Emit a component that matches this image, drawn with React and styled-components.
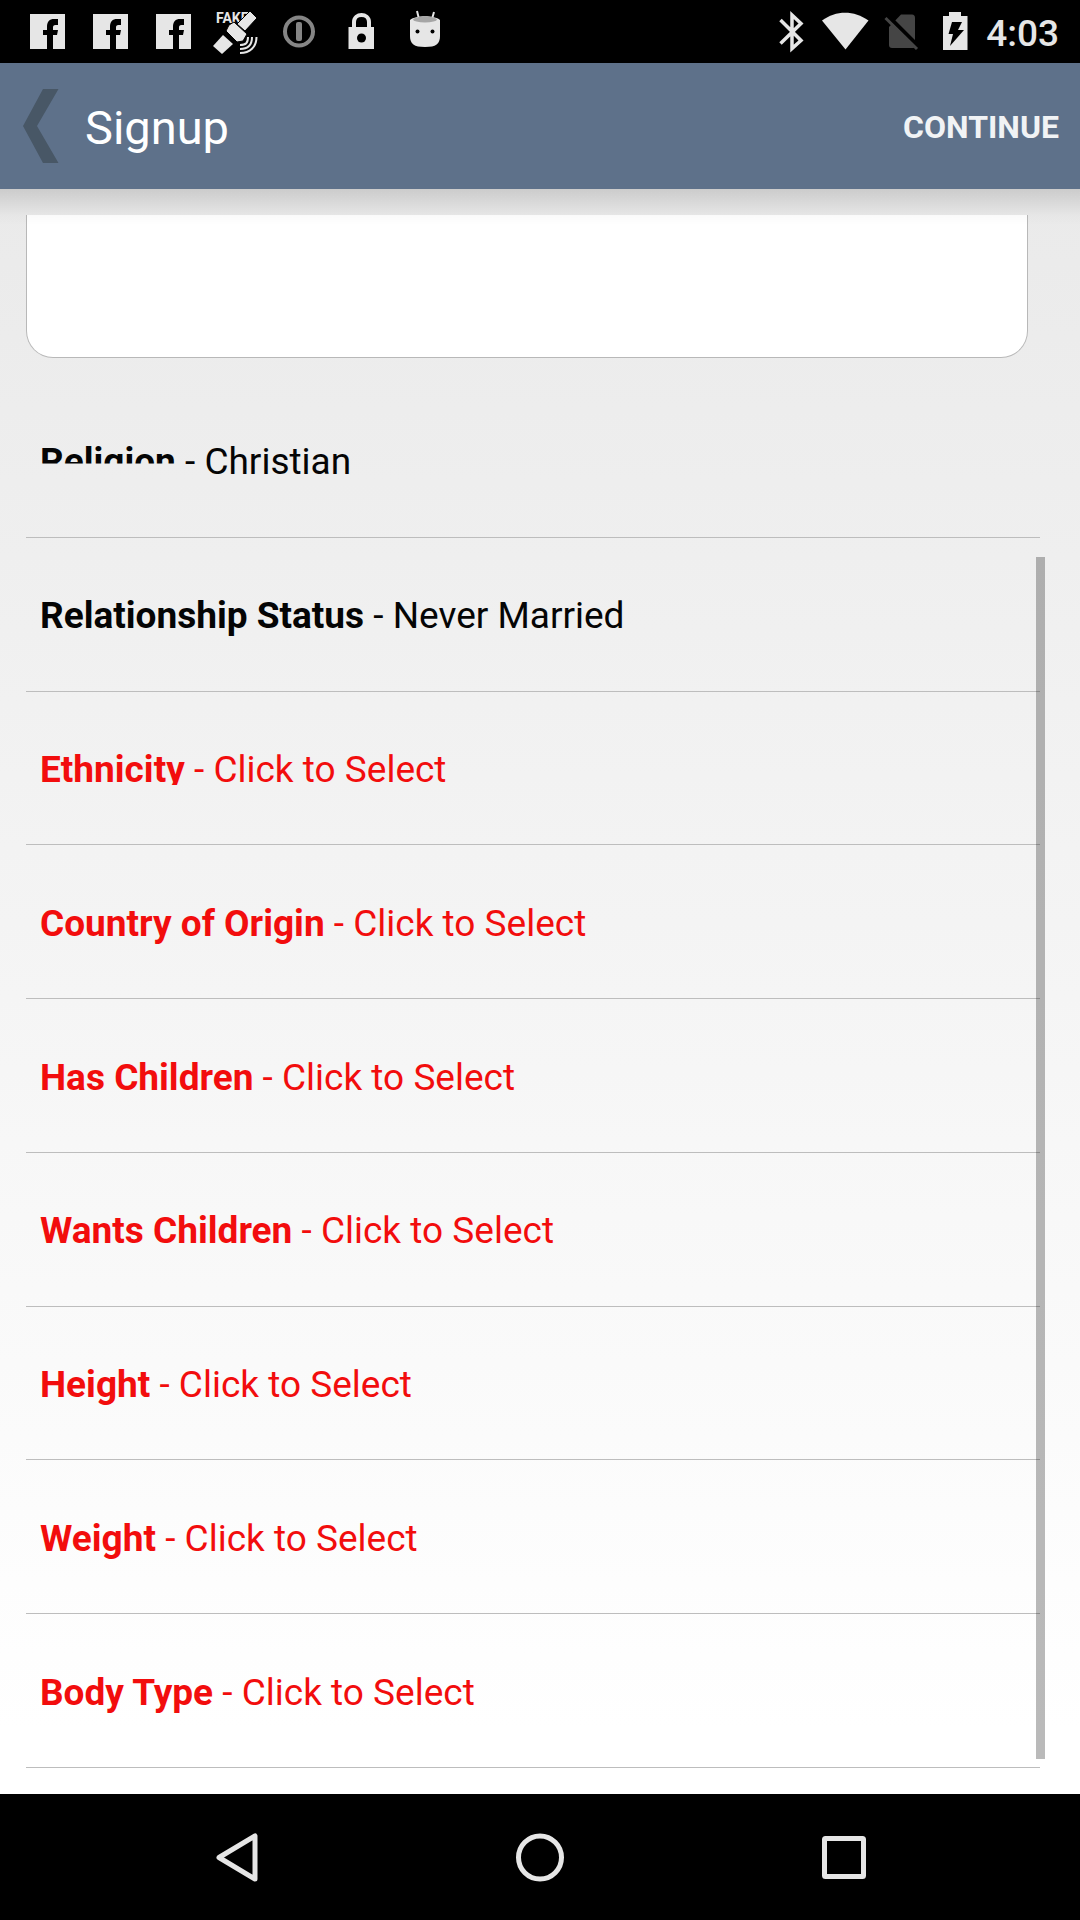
import React from "react";
import styled, { createGlobalStyle } from "styled-components";

const GlobalStyle = createGlobalStyle`
  *, *::before, *::after { box-sizing: border-box; }
  body { margin: 0; font-family: Roboto, "Noto Sans", sans-serif; background: #000; }
  button { border: 0; padding: 0; background: none; font: inherit; color: inherit; cursor: pointer; }
`;

const Screen = styled.div`
  display: flex;
  flex-direction: column;
  min-height: 100vh;
`;

const StatusBar = styled.div`
  display: flex;
  justify-content: space-between;
  height: 63px;
  padding: 0 21px 0 16px;
  background: #000;
  color: #e6e6e6;
`;

const StatusGroup = styled.div`
  display: flex;
  align-items: center;
`;

const StatusIcon = styled.svg`
  display: block;
  height: 63px;
  width: ${(p) => p.$width}px;
`;

const Clock = styled.time`
  font-size: 37px;
  line-height: 44px;
  font-weight: 500;
  padding: 4px 0 0 2px;
`;

const Header = styled.header`
  position: relative;
  z-index: 1;
  display: flex;
  align-items: center;
  justify-content: space-between;
  height: 126px;
  padding: 0 21px;
  background: #5e718a;

  &::after {
    content: "";
    position: absolute;
    inset: 100% 0 auto;
    height: 36px;
    background: linear-gradient(rgba(0, 0, 0, 0.13), rgba(0, 0, 0, 0.02) 72%, rgba(0, 0, 0, 0));
    pointer-events: none;
  }
`;

const HeaderStart = styled.div`
  display: flex;
  align-items: center;
  gap: 26px;
`;

const BackButton = styled.button`
  display: block;
  svg { display: block; }
`;

const Title = styled.h1`
  margin: 0;
  padding-top: 4px;
  font-size: 47px;
  line-height: 56px;
  font-weight: 400;
  color: #fff;
`;

const ContinueButton = styled.button`
  padding-top: 2px;
  font-size: 32px;
  line-height: 40px;
  font-weight: 700;
  color: #f1f3f5;
`;

const Main = styled.main`
  position: relative;
  flex: 1;
  display: flex;
  flex-direction: column;
  padding: 26px 40px 26px 26px;
  background: linear-gradient(#eaeaea, #fff 96%);
`;

const AboutBox = styled.textarea`
  display: block;
  height: 143px;
  margin: 0 12px 26px 0;
  padding: 16px;
  border: 1px solid #b8b8b8;
  border-top: 0;
  border-radius: 0 0 27px 27px;
  outline: 0;
  resize: none;
  background: #fff;
  font: inherit;
  font-size: 37px;
`;

const Fields = styled.ul`
  flex: 1;
  display: flex;
  flex-direction: column;
  margin: 0;
  padding: 0;
  list-style: none;
`;

const Field = styled.li`
  flex: 1;
  display: flex;
  min-height: 96px;
  border-bottom: 1px solid #bdbdbd;
`;

const FieldButton = styled.button`
  flex: 1;
  padding: 4px 14px 0;
  text-align: left;
  white-space: pre;
  font-size: 37px;
  line-height: 44px;
  color: ${(p) => (p.$missing ? "#f20d0d" : "#050505")};
`;

const FieldLabel = styled.b`
  display: inline-block;
  font-weight: 700;
  clip-path: inset(0 0 ${(p) => p.$cut || 0}px 0);
`;

const ScrollThumb = styled.div`
  position: absolute;
  top: 368px;
  right: 35px;
  bottom: 35px;
  width: 9px;
  background: rgba(0, 0, 0, 0.27);
`;

const NavBar = styled.nav`
  display: flex;
  height: 126px;
  padding: 0 85px;
  background: #000;
`;

const NavButton = styled.button`
  flex: 1;
  display: flex;
  align-items: center;
  justify-content: center;
`;

const fields = [
  { label: "Religion", value: "Christian", cut: 21 },
  { label: "Relationship Status", value: "Never Married" },
  { label: "Ethnicity", cut: 7 },
  { label: "Country of Origin" },
  { label: "Has Children" },
  { label: "Wants Children" },
  { label: "Height" },
  { label: "Weight" },
  { label: "Body Type" },
];

const Facebook = () => (
  <StatusIcon $width={63} viewBox="16 0 63 63" aria-hidden="true">
    <path fill="#e6e6e6" d="M30 14H65V49H30Z" />
    <path
      fill="#000"
      d="M47 49V35H43V30H47V27C47 21.500 49.500 19 54 19H58V25H55.500C53.500 25 53 26 53 27.500V30H58L57 35H53V49Z"
    />
  </StatusIcon>
);

const Satellite = () => (
  <StatusIcon $width={63} viewBox="205 0 63 63" aria-hidden="true">
    <text x="216" y="23" fontSize="14" fontWeight="700" fill="#e6e6e6" fontFamily="Roboto, sans-serif">
      FAKE
    </text>
    <g fill="#e6e6e6">
      <path d="M250 11L257 18L245 31L237 24Z" stroke="#000" />
      <path d="M223 35L233 44L222 54L213 46Z" />
      <path d="M234 22L247 34L243 41L237 42L226 31L229 25Z" stroke="#000" />
    </g>
    <g fill="none" stroke="#e6e6e6" strokeWidth="2">
      <path d="M248 37C248 43 246 45 240 45" />
      <path d="M252 37C252 45 248 49 240 49" />
      <path d="M256.500 37C256.500 47 250 53 240 53" />
    </g>
  </StatusIcon>
);

const Info = () => (
  <StatusIcon $width={63} viewBox="268 0 63 63" aria-hidden="true">
    <circle cx="299" cy="31.500" r="14" fill="none" stroke="#858585" strokeWidth="4" />
    <rect x="296" y="22" width="6" height="19" rx="2" fill="#858585" />
  </StatusIcon>
);

const Lock = () => (
  <StatusIcon $width={63} viewBox="331 0 63 63" aria-hidden="true">
    <path d="M354 29V22C354 12.500 369 12.500 369 22V29" fill="none" stroke="#e6e6e6" strokeWidth="4" />
    <rect x="348.500" y="27" width="25.500" height="22" fill="#e6e6e6" />
    <circle cx="361.500" cy="38" r="4.500" fill="#000" />
  </StatusIcon>
);

const Robot = () => (
  <StatusIcon $width={63} viewBox="394 0 63 63" aria-hidden="true">
    <path d="M417 11L419 19M434 12L432 19" stroke="#e6e6e6" strokeWidth="2" />
    <path d="M410 20C416 15 434 15 440 20V36C440 44 436 47 425 47C414 47 410 44 410 36Z" fill="#e6e6e6" />
    <ellipse cx="425" cy="19.500" rx="12" ry="3" fill="#a5a5a5" />
    <circle cx="417.500" cy="31.500" r="2" fill="#000" />
    <circle cx="432.500" cy="31.500" r="2" fill="#000" />
  </StatusIcon>
);

const Bluetooth = () => (
  <StatusIcon $width={55} viewBox="764 0 55 63" aria-hidden="true">
    <path
      d="M780.500 20L801 40.500L792 48.500V15L801 23.500L780.500 43.500"
      fill="none"
      stroke="#e6e6e6"
      strokeWidth="3.500"
    />
  </StatusIcon>
);

const Wifi = () => (
  <StatusIcon $width={55} viewBox="819 0 55 63" aria-hidden="true">
    <path d="M822 20.500C836 10 854 10 868.500 20.500L845.500 49.500Z" fill="#e6e6e6" />
  </StatusIcon>
);

const NoSim = () => (
  <StatusIcon $width={55} viewBox="874 0 55 63" aria-hidden="true">
    <path d="M901 14.500H912C914 14.500 915 16 915 18V46C915 47.500 914 48 912 48H892C890 48 889 47 889 45V27Z" fill="#454545" />
    <path d="M888 16L919 47" stroke="#000" strokeWidth="4" />
    <path d="M885.500 18L917 49" stroke="#454545" strokeWidth="3" />
  </StatusIcon>
);

const Battery = () => (
  <StatusIcon $width={55} viewBox="929 0 55 63" aria-hidden="true">
    <path d="M943 16H949V12H961V16H967.500V50H943Z" fill="#e6e6e6" />
    <path d="M952 22H962L958 30H964L950 46L953 34H948.500Z" fill="#000" />
  </StatusIcon>
);

export default function App() {
  return (
    <>
      <GlobalStyle />
      <Screen>
        <StatusBar>
          <StatusGroup>
            <Facebook />
            <Facebook />
            <Facebook />
            <Satellite />
            <Info />
            <Lock />
            <Robot />
          </StatusGroup>
          <StatusGroup>
            <Bluetooth />
            <Wifi />
            <NoSim />
            <Battery />
            <Clock>4:03</Clock>
          </StatusGroup>
        </StatusBar>

        <Header>
          <HeaderStart>
            <BackButton aria-label="Back">
              <svg width="38" height="74" viewBox="21 89 38 74">
                <path d="M43 89H58.500L37 126L58.500 163H43L23 126Z" fill="#485766" />
              </svg>
            </BackButton>
            <Title>Signup</Title>
          </HeaderStart>
          <ContinueButton>CONTINUE</ContinueButton>
        </Header>

        <Main>
          <AboutBox aria-label="About me" />
          <Fields>
            {fields.map(({ label, value, cut }) => (
              <Field key={label}>
                <FieldButton $missing={!value}>
                  <FieldLabel $cut={cut}>{label}</FieldLabel>
                  {" - " + (value || "Click to Select")}
                </FieldButton>
              </Field>
            ))}
          </Fields>
          <ScrollThumb />
        </Main>

        <NavBar>
          <NavButton aria-label="Back">
            <svg width="50" height="50" viewBox="0 0 50 50">
              <path d="M43 4V47L7 25.500Z" fill="none" stroke="#e6e6e6" strokeWidth="5" strokeLinejoin="round" />
            </svg>
          </NavButton>
          <NavButton aria-label="Home">
            <svg width="50" height="50" viewBox="0 0 50 50">
              <circle cx="25" cy="25.500" r="21.500" fill="none" stroke="#e6e6e6" strokeWidth="5" />
            </svg>
          </NavButton>
          <NavButton aria-label="Recent apps">
            <svg width="50" height="50" viewBox="0 0 50 50">
              <rect x="6.500" y="6.500" width="39" height="38" rx="1" fill="none" stroke="#e6e6e6" strokeWidth="5" strokeLinejoin="round" />
            </svg>
          </NavButton>
        </NavBar>
      </Screen>
    </>
  );
}
